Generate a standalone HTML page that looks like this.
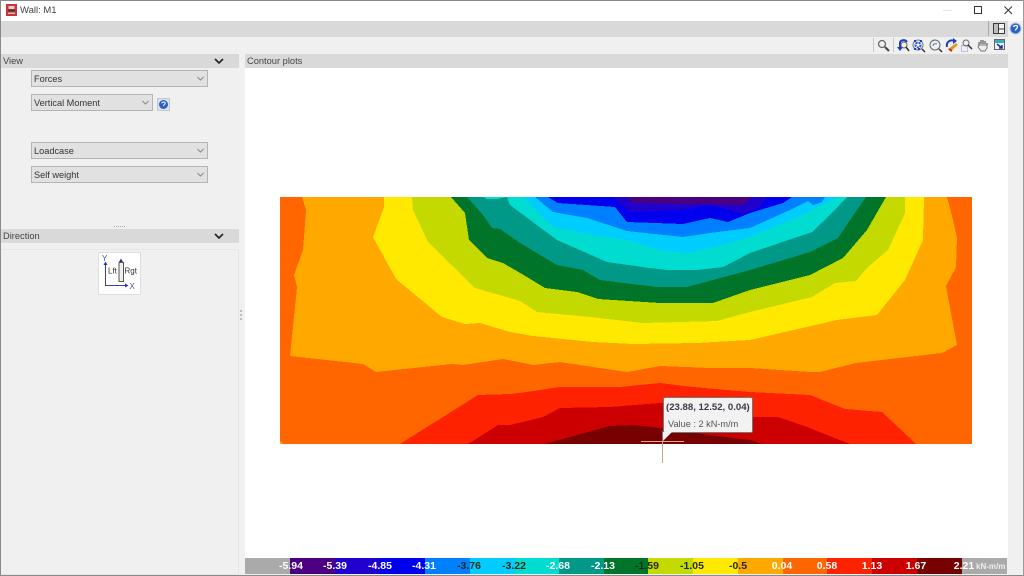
<!DOCTYPE html>
<html><head><meta charset="utf-8"><title>Wall: M1</title>
<style>
html,body{margin:0;padding:0}
body{width:1024px;height:576px;position:relative;overflow:hidden;background:#f0f0f0;font-family:"Liberation Sans",sans-serif;font-size:9px;color:#333}
div{position:absolute;box-sizing:border-box}
.hd{background:#d9d9d9;height:14px;line-height:15px;padding-left:2px;color:#444;font-size:9.3px}
.sel{background:#e1e1e1;border:1px solid #b4b4b4;height:17px;line-height:17px;padding-left:2px;font-size:9.2px;color:#333}
.sel svg{position:absolute;right:3px;top:5px}
.lb{top:558px;width:44px;height:16px;line-height:17px;text-align:center;font-size:10.5px;font-weight:bold;color:#fff;font-family:"Liberation Sans",sans-serif}
.d{color:#1c2a1c}
.seg{top:558px;height:16px}
</style></head><body>
<div style="left:0;top:0;width:1024px;height:21px;background:#fff;border-top:1px solid #8a8a8a"></div>
<div style="left:0;top:0;width:1px;height:576px;background:#8a8a8a"></div>
<div style="left:0;top:575px;width:1024px;height:1px;background:#8a8a8a"></div>
<div style="left:1023px;top:0;width:1px;height:576px;background:#9a9a9a"></div>
<svg style="position:absolute;left:6px;top:4px" width="11" height="12" viewBox="0 0 11 12"><rect width="11" height="12" fill="#c8343a"/><rect x="2.500" y="2" width="6" height="3" fill="#e8c8c8"/><rect x="2" y="5.500" width="7" height="2" fill="#4a3535"/><rect x="2" y="8.500" width="7" height="1.500" fill="#e8b8b8"/></svg>
<div style="left:20px;top:4px;line-height:14px;font-size:9.5px;color:#444">Wall: M1</div>
<div style="left:943px;top:10px;width:9px;height:1px;background:#e4e4e4"></div>
<div style="left:974px;top:6px;width:8px;height:8px;border:1px solid #333"></div>
<svg style="position:absolute;left:1004px;top:6px" width="9" height="9" viewBox="0 0 9 9"><path d="M.5 .5L8 8M8 .5L.5 8" stroke="#333" stroke-width="1"/></svg>

<div style="left:1px;top:21px;width:1007px;height:16px;background:#d9d9d9"></div>
<div style="left:988px;top:21px;width:1px;height:15px;background:#a8a8a8"></div>
<svg style="position:absolute;left:993px;top:23px" width="12" height="11" viewBox="0 0 12 11"><rect x=".5" y=".5" width="11" height="10" fill="#f4f4f4" stroke="#3a3a3a"/><path d="M5.500 .5V10.500M5.500 6H11.500" stroke="#3a3a3a"/><rect x="1" y="1" width="4" height="9" fill="#bdbdbd"/></svg>
<svg style="position:absolute;left:1009px;top:22px" width="13" height="13" viewBox="0 0 13 13"><circle cx="6.500" cy="6.500" r="5.500" fill="#2a63c8" stroke="#b5c8e8"/><path d="M4.500 5c.5-2 4-2 4 0 0 1.500-2 1.500-2 3.500" stroke="#fff" fill="none" stroke-width="1.300"/></svg>

<div style="left:873px;top:38px;width:1px;height:14px;background:#c8c8c8"></div>
<div style="left:893px;top:38px;width:1px;height:14px;background:#c8c8c8"></div>
<svg style="position:absolute;left:876px;top:38px" width="134" height="15" viewBox="876 38 134 15" fill="none">
<circle cx="882" cy="44" r="3.500" stroke="#666" stroke-width="1.300"/><path d="M885 47L889 51" stroke="#444" stroke-width="2"/>
<path d="M900 49V43c0-3 5-4 7-1" stroke="#1a3fc0" stroke-width="2"/><path d="M897 47l3 4 3-4z" fill="#1a3fc0"/><circle cx="904" cy="45" r="3" stroke="#666"/><path d="M906 47L909 51" stroke="#333" stroke-width="1.500"/>
<circle cx="918" cy="45" r="5" stroke="#777" stroke-width="1"/><circle cx="918" cy="45" r="2.500" stroke="#1f50d8" stroke-width="2" stroke-dasharray="2 1"/><path d="M914 41h2M920 41h2M914 49h2M920 49h-2" stroke="#1a3fc0" stroke-width="2"/><path d="M922 49L925 52" stroke="#333" stroke-width="1.500"/>
<circle cx="935" cy="45" r="5" stroke="#666"/><path d="M933 46c0-2 2-3 4-2" stroke="#4a78d0"/><path d="M939 49L942 52" stroke="#333" stroke-width="1.500"/>
<path d="M947 47c-1-5 3-8 8-6" stroke="#1a3fc0" stroke-width="2"/><path d="M953 38l4 3-4 3z" fill="#1a3fc0"/><path d="M948 49l8-6 2 2-7 6z" fill="#d8a02a"/><path d="M949 49l3 2" stroke="#c03020" stroke-width="2"/>
<rect x="961.500" y="45.500" width="6" height="6" stroke="#7a90d8" stroke-dasharray="1 1"/><circle cx="966" cy="43" r="3" stroke="#666"/><path d="M968 45L972 49" stroke="#333" stroke-width="1.500"/>
<path d="M979 45v-3M981 44v-4M983 44v-4M985 44v-3M987 45v-2" stroke="#666" stroke-width="1.300"/><path d="M979 45h8v3l-2 3h-4l-3-4z" fill="#eee" stroke="#777"/>
<rect x="994.500" y="39.500" width="10" height="10" fill="#eef4fa" stroke="#666"/><rect x="995" y="40" width="9" height="3" fill="#3aa8c8"/><path d="M997 44l5 4M1002 45v3h-3" stroke="#1a2fa0" stroke-width="1.500"/>
</svg>

<div class="hd" style="left:1px;top:54px;width:238px">View</div>
<svg style="position:absolute;left:214px;top:58px" width="10" height="6" viewBox="0 0 10 6"><path d="M1 1l4 4 4-4" fill="none" stroke="#222" stroke-width="1.600"/></svg>
<div class="sel" style="left:31px;top:70px;width:177px">Forces<svg width="7" height="5" viewBox="0 0 7 5"><path d="M.5 1l3 3 3-3" fill="none" stroke="#888"/></svg></div>
<div class="sel" style="left:31px;top:94px;width:122px">Vertical Moment<svg width="7" height="5" viewBox="0 0 7 5"><path d="M.5 1l3 3 3-3" fill="none" stroke="#888"/></svg></div>
<svg style="position:absolute;left:157px;top:98px" width="13" height="13" viewBox="0 0 13 13"><rect x=".5" y=".5" width="12" height="12" fill="#dde3ea" stroke="#c2c8d0"/><circle cx="6.500" cy="6.500" r="4.500" fill="#2a5ec8"/><path d="M4.800 5.200c.4-1.600 3.400-1.600 3.400 0 0 1.300-1.700 1.200-1.700 3" stroke="#fff" fill="none"/></svg>
<div class="sel" style="left:31px;top:142px;width:177px">Loadcase<svg width="7" height="5" viewBox="0 0 7 5"><path d="M.5 1l3 3 3-3" fill="none" stroke="#888"/></svg></div>
<div class="sel" style="left:31px;top:166px;width:177px">Self weight<svg width="7" height="5" viewBox="0 0 7 5"><path d="M.5 1l3 3 3-3" fill="none" stroke="#888"/></svg></div>
<div style="left:114px;top:226px;width:11px;height:2px;border-top:1px dotted #aaa"></div>
<div class="hd" style="left:1px;top:229px;width:238px">Direction</div>
<svg style="position:absolute;left:214px;top:233px" width="10" height="6" viewBox="0 0 10 6"><path d="M1 1l4 4 4-4" fill="none" stroke="#222" stroke-width="1.600"/></svg>
<div style="left:1px;top:249px;width:238px;height:326px;border:1px solid #e6e6e6;border-left:0"></div>
<div style="left:98px;top:252px;width:43px;height:43px;background:#fff;border:1px solid #dedede"></div>
<svg style="position:absolute;left:98px;top:252px" width="43" height="43" viewBox="0 0 43 43" font-family="Liberation Sans,sans-serif">
<path d="M7.500 12V33.500H28" stroke="#3a3fb0" fill="none"/><path d="M5.500 13l2-3.500 2 3.500zM27 31.500l3.500 2-3.500 2z" fill="#2a2fa8"/>
<rect x="21" y="10.500" width="4.500" height="19" fill="#eee" stroke="#555"/><path d="M21 10l2-3.500 2 3.500z" fill="#2a2fa8"/>
<text x="4" y="9" font-size="8" fill="#4a50b8">Y</text><text x="31.500" y="37" font-size="8" fill="#4a50b8">X</text>
<text x="10" y="21.500" font-size="8" fill="#333">Lft</text><text x="26.500" y="21.500" font-size="8" fill="#333">Rgt</text></svg>
<div style="left:240px;top:310px;width:2px;height:10px;border-left:2px dotted #bbb"></div>

<div class="hd" style="left:245px;top:54px;width:763px">Contour plots</div>
<div style="left:245px;top:68px;width:763px;height:490px;background:#fff"></div>

<svg style="position:absolute;left:0;top:0" width="1024" height="576" viewBox="0 0 1024 576" shape-rendering="crispEdges">
<rect x="280" y="197" width="692" height="247" fill="#ff6600"/>
<polygon fill="#ffa800" points="280,441 283,444 280,444"/>
<polygon fill="#ffa800" points="302,197 306,210 303,250 294,275 297,287 290,356 363,364 376,372 452,364 463,365 503,359 533,365 560,362 593,367 627,372 660,366 710,368 750,368 810,372 820,372 856,363 942,353 957,345 946,286 956,267 957,238 953,220 947,197"/>
<polygon fill="#ffe900" points="384,197 384,207 373,237 396,279 442,317 465,324 480,323 510,332 533,336 593,342 633,344 697,343 750,340 837,320 877,315 905,280 923,240 924,197"/>
<polygon fill="#c3d900" points="412,197 413,210 428,242 475,288 520,301 537,312 590,317 643,323 717,321 750,312 812,297 835,283 856,281 867,268 888,250 905,213 905,197"/>
<polygon fill="#00752a" points="451,197 465,213 469,240 487,258 503,263 527,277 545,288 577,292 598,299 660,303 713,303 750,290 810,275 843,258 867,230 886,197"/>
<polygon fill="#009988" points="467,197 483,215 492,228 500,229 520,243 557,265 583,270 600,280 657,287 687,287 750,270 810,252 838,238 850,220 866,197"/>
<polygon fill="#00dcd0" points="483,197 487,199 497,199 507,197 510,205 557,240 607,262 650,268 667,270 697,270 723,267 750,253 812,232 832,213 847,197"/>
<polygon fill="#00ccff" points="523,197 553,227 593,235 627,240 660,250 687,253 710,248 750,237 797,217 822,205 838,197"/>
<polygon fill="#0080ff" points="535,197 553,212 587,218 627,231 683,237 710,233 750,228 790,210 808,201 813,205 822,202 825,197"/>
<polygon fill="#0000ee" points="548,197 558,203 615,207 627,222 683,224 710,218 728,222 750,213 783,203 792,197"/>
<polygon fill="#2000cc" points="613,197 630,212 683,210 710,205 743,214 760,207 767,197"/>
<polygon fill="#4b0082" points="627,197 633,203 743,205 752,197"/>
<polygon fill="#ff2200" points="400,444 478,395 510,394 520,393 560,387 620,387 660,383 693,387 750,392 810,395 845,409 882,412 916,444"/>
<polygon fill="#cc0000" points="468,444 498,425 510,425 543,417 560,408 610,407 660,403 690,403 750,417 778,417 807,427 850,444"/>
<polygon fill="#770000" points="545,444 577,435 610,426 633,425 660,428 710,435 750,440 762,444"/>
</svg>

<div style="left:641px;top:441px;width:43px;height:1px;background:#d8a898"></div>
<div style="left:662px;top:441px;width:1px;height:22px;background:#c9a57e"></div>
<div style="left:663px;top:397px;width:90px;height:36px;background:#f2f2f2;border:1px solid #777;border-radius:2px"></div>
<svg style="position:absolute;left:662px;top:431px" width="14" height="11" viewBox="0 0 14 11"><path d="M1 10V1H10z" fill="#f2f2f2"/><path d="M.5 0V10" stroke="#777"/></svg>
<div style="left:666px;top:401px;line-height:13px;font-size:9.6px;font-weight:bold;color:#3a3a48;white-space:nowrap">(23.88, 12.52, 0.04)</div>
<div style="left:668px;top:418px;line-height:13px;font-size:9.2px;color:#555;white-space:nowrap">Value : 2 kN-m/m</div>

<div class="seg" style="left:245px;width:45px;background:#aaa"></div>
<div class="seg" style="left:290px;width:45px;background:#4b0082"></div>
<div class="seg" style="left:335px;width:45px;background:#2000cc"></div>
<div class="seg" style="left:380px;width:45px;background:#0000ee"></div>
<div class="seg" style="left:425px;width:45px;background:#0080ff"></div>
<div class="seg" style="left:470px;width:45px;background:#00ccff"></div>
<div class="seg" style="left:515px;width:44px;background:#00dcd0"></div>
<div class="seg" style="left:559px;width:45px;background:#009988"></div>
<div class="seg" style="left:604px;width:44px;background:#00752a"></div>
<div class="seg" style="left:648px;width:45px;background:#c3d900"></div>
<div class="seg" style="left:693px;width:45px;background:#ffe900"></div>
<div class="seg" style="left:738px;width:45px;background:#ffa800"></div>
<div class="seg" style="left:783px;width:44px;background:#ff6600"></div>
<div class="seg" style="left:827px;width:45px;background:#ff2200"></div>
<div class="seg" style="left:872px;width:45px;background:#cc0000"></div>
<div class="seg" style="left:917px;width:45px;background:#770000"></div>
<div class="seg" style="left:962px;width:45px;background:#aaa"></div>
<div class="lb" style="left:269px">-5.94</div>
<div class="lb" style="left:313px">-5.39</div>
<div class="lb" style="left:358px">-4.85</div>
<div class="lb" style="left:402px">-4.31</div>
<div class="lb d" style="left:447px">-3.76</div>
<div class="lb d" style="left:492px">-3.22</div>
<div class="lb" style="left:536px">-2.68</div>
<div class="lb" style="left:581px">-2.13</div>
<div class="lb d" style="left:625px">-1.59</div>
<div class="lb d" style="left:670px">-1.05</div>
<div class="lb d" style="left:716px">-0.5</div>
<div class="lb" style="left:760px">0.04</div>
<div class="lb" style="left:805px">0.58</div>
<div class="lb" style="left:850px">1.13</div>
<div class="lb" style="left:894px">1.67</div>
<div class="lb" style="left:942px">2.21</div>
<div style="left:976px;top:558px;line-height:17px;font-size:8px;font-weight:bold;color:#eee;white-space:nowrap">kN-m/m</div>
</body></html>
